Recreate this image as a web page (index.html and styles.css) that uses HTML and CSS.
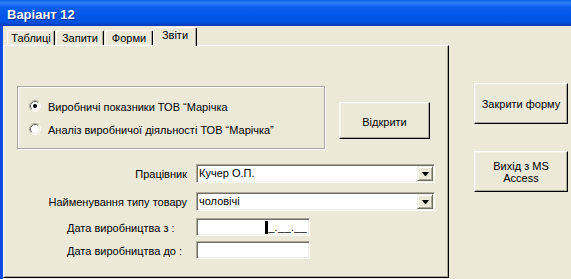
FILE: index.html
```html
<!DOCTYPE html>
<html lang="uk">
<head>
<meta charset="utf-8">
<title>Варіант 12</title>
<link rel="stylesheet" href="styles.css">
</head>
<body>
<div class="titlebar"><span class="title">Варіант 12</span></div>
<div class="client">
  <div class="tabctl">
    <div class="tabs">
      <div class="tab t1">Таблиці</div>
      <div class="tab t2">Запити</div>
      <div class="tab t3">Форми</div>
      <div class="tab sel">Звіти</div>
    </div>
    <div class="panel">
      <div class="toprow">
        <div class="group">
          <div class="opt">
            <svg class="radio" width="12" height="12" viewBox="0 0 12 12">
              <circle cx="6" cy="6" r="4.5" fill="#fff"/>
              <path d="M2.11 9.89 A5.5 5.5 0 0 1 9.89 2.11" fill="none" stroke="#aca899"/>
              <path d="M9.89 2.11 A5.5 5.5 0 0 1 2.11 9.89" fill="none" stroke="#fff"/>
              <path d="M2.82 9.18 A4.5 4.5 0 0 1 9.18 2.82" fill="none" stroke="#716f64"/>
              <path d="M9.18 2.82 A4.5 4.5 0 0 1 2.82 9.18" fill="none" stroke="#f1efe2"/>
              <circle cx="6" cy="6" r="2" fill="#000"/>
            </svg>
            <span class="optlabel">Виробничі показники ТОВ “Марічка</span>
          </div>
          <div class="opt opt2">
            <svg class="radio" width="12" height="12" viewBox="0 0 12 12">
              <circle cx="6" cy="6" r="4.5" fill="#fff"/>
              <path d="M2.11 9.89 A5.5 5.5 0 0 1 9.89 2.11" fill="none" stroke="#aca899"/>
              <path d="M9.89 2.11 A5.5 5.5 0 0 1 2.11 9.89" fill="none" stroke="#fff"/>
              <path d="M2.82 9.18 A4.5 4.5 0 0 1 9.18 2.82" fill="none" stroke="#716f64"/>
              <path d="M9.18 2.82 A4.5 4.5 0 0 1 2.82 9.18" fill="none" stroke="#f1efe2"/>
            </svg>
            <span class="optlabel">Аналіз виробничої діяльності ТОВ “Марічка”</span>
          </div>
        </div>
        <div class="btn open">Відкрити</div>
      </div>
      <div class="form">
        <div class="row r1">
          <div class="lbl">Працівник</div>
          <div class="combo"><span class="val">Кучер О.П.</span><span class="drop"><span class="arrow"></span></span></div>
        </div>
        <div class="row r2">
          <div class="lbl">Найменування типу товару</div>
          <div class="combo"><span class="val">чоловічі</span><span class="drop"><span class="arrow"></span></span></div>
        </div>
        <div class="row r3">
          <div class="lbl left">Дата виробництва з :</div>
          <div class="textbox mask"><span class="caret"></span><span class="masktext">_.__.__</span></div>
        </div>
        <div class="row r4">
          <div class="lbl left">Дата виробництва до :</div>
          <div class="textbox"></div>
        </div>
      </div>
    </div>
  </div>
  <div class="side">
    <div class="btn big">Закрити форму</div>
    <div class="btn big second">Вихід з MS<br>Access</div>
  </div>
</div>
</body>
</html>
```
FILE: styles.css
```css
* { box-sizing: border-box; }
html, body { margin: 0; padding: 0; }
body {
  width: 571px;
  height: 279px;
  overflow: hidden;
  background: #ECE9D8;
  font-family: "Liberation Sans", Arial, sans-serif;
  font-size: 11px;
  color: #000;
}
.titlebar {
  height: 26px;
  padding: 3px 0 0 7px;
  line-height: 23px;
  background: linear-gradient(to bottom, #0a5ee8 0%, #2d7ff4 10%, #0c5fee 28%, #0056e8 60%, #0053e0 85%, #0043cc 94%, #0035b0 100%);
  color: #fff;
  font-weight: bold;
  font-size: 13px;
  text-shadow: 1px 1px 0 #0c2d9a;
}
.client {
  display: flex;
  height: 253px;
  border-left: 3px solid #0b4be0;
}
.tabctl { width: 446px; display: flex; flex-direction: column; }
.tabs {
  height: 19px;
  display: flex;
  align-items: flex-end;
  padding-left: 4px;
}
.tab {
  width: 48px;
  height: 15px;
  border-top: 1px solid #fff;
  border-left: 1px solid #fff;
  border-right: 1px solid #000;
  border-radius: 2px 2px 0 0;
  box-shadow: inset -1px 0 0 #aca899;
  text-align: center;
  line-height: 14px;
  margin-right: 1px;
}
.t3 { margin-right: 0; }
.tab.sel {
  width: 44px;
  height: 19px;
  margin-bottom: -1px;
  position: relative;
  z-index: 1;
  background: #ECE9D8;
}
.panel {
  height: 233px;
  border-top: 1px solid #fff;
  border-left: 1px solid #fff;
  border-right: 1px solid #000;
  border-bottom: 1px solid #000;
  box-shadow: inset -1px -1px 0 #aca899;
  padding-top: 40px;
}
.toprow { display: flex; align-items: flex-start; }
.group {
  width: 308px;
  height: 63px;
  margin-left: 13px;
  border: 1px solid #aca899;
  box-shadow: inset 1px 1px 0 #fff, 1px 1px 0 #fff;
  padding: 11px 0 0 11px;
}
.opt { display: flex; align-items: center; height: 16px; }
.opt2 { margin-top: 7px; }
.radio { display: block; flex: none; }
.optlabel { margin-left: 7px; padding-top: 2px; white-space: nowrap; }
.btn {
  display: flex;
  align-items: center;
  justify-content: center;
  text-align: center;
  background: #ECE9D8;
  border: 1px solid;
  border-color: #fff #000 #000 #fff;
  box-shadow: inset -1px -1px 0 #aca899, inset 1px 1px 0 #f1efe2;
}
.open { width: 91px; height: 37px; margin: 16px 0 0 14px; padding-top: 2px; }
.form { margin-top: 15px; }
.row {
  display: grid;
  grid-template-columns: 192px auto;
  align-items: center;
}
.r1 { height: 19px; }
.r2 { height: 19px; margin-top: 9px; }
.r3 { height: 18px; margin-top: 7px; }
.r4 { height: 18px; margin-top: 5px; }
.lbl { text-align: right; padding-right: 9px; white-space: nowrap; padding-top: 1px; }
.lbl.left { text-align: left; padding-left: 63px; padding-right: 0; }
.combo, .textbox {
  background: #fff;
  border: 1px solid;
  border-color: #aca899 #fff #fff #aca899;
  box-shadow: inset 1px 1px 0 #716f64, inset -1px -1px 0 #f1efe2;
  padding: 1px;
}
.combo {
  width: 239px;
  height: 19px;
  display: flex;
  justify-content: space-between;
  align-items: stretch;
}
.val { padding-left: 1px; line-height: 15px; }
.drop {
  width: 16px;
  background: #ECE9D8;
  border: 1px solid;
  border-color: #f1efe2 #716f64 #716f64 #f1efe2;
  box-shadow: inset 1px 1px 0 #fff, inset -1px -1px 0 #aca899;
  display: flex;
  align-items: center;
  justify-content: center;
}
.arrow {
  width: 1px;
  height: 0;
  border-top: 4px solid #000;
  border-left: 3px solid transparent;
  border-right: 3px solid transparent;
  box-sizing: content-box;
}
.textbox { width: 114px; height: 18px; }
.mask {
  display: flex;
  justify-content: flex-end;
  align-items: center;
  padding-right: 2px;
}
.caret { width: 3px; height: 13px; background: #000; }
.masktext { line-height: 13px; letter-spacing: 0.3px; }
.side { padding: 57px 0 0 25px; }
.big { width: 94px; height: 41px; line-height: 12px; }
.second { margin-top: 27px; }
```
